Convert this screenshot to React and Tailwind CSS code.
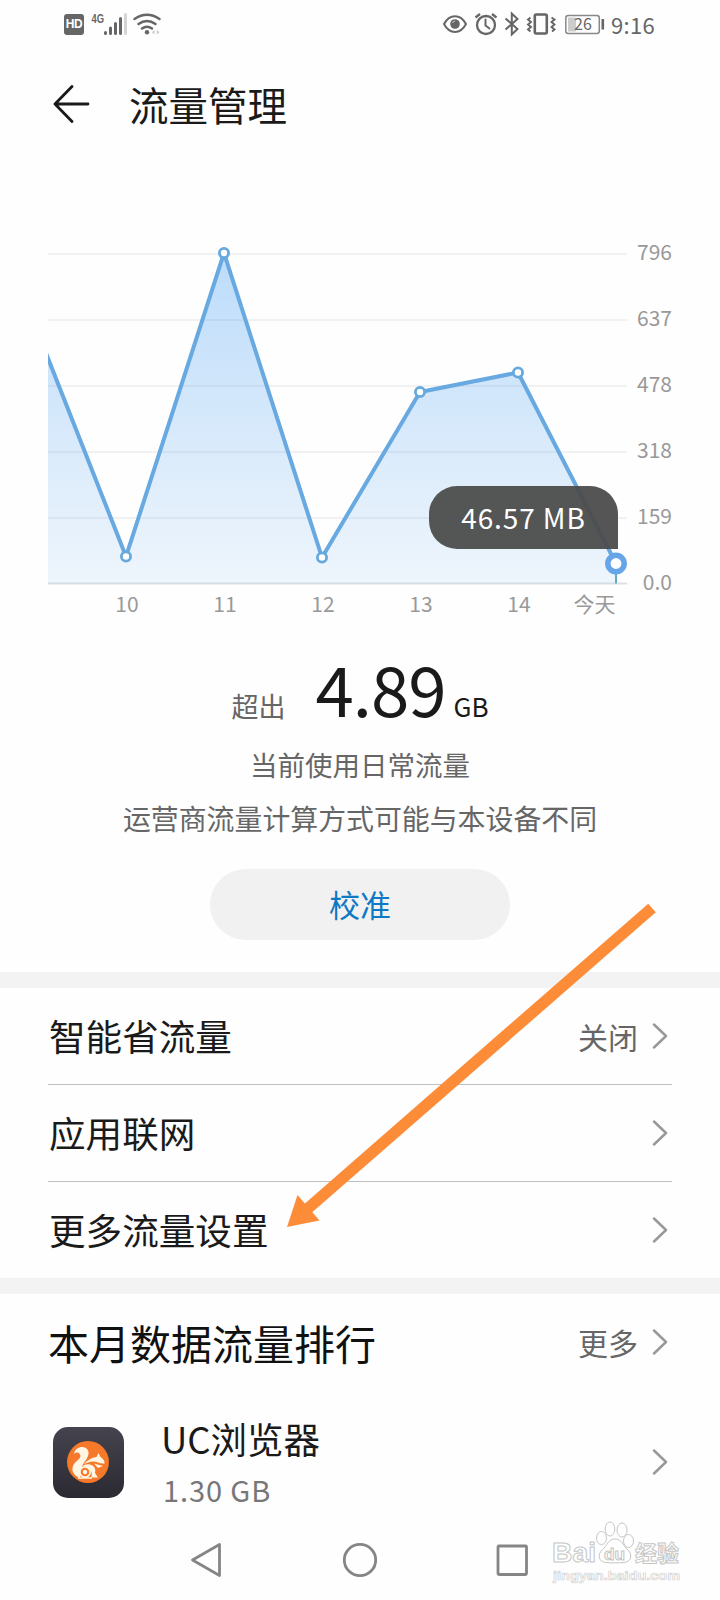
import React from 'react';

const GRID = [
    { y: 254, label: '796' },
    { y: 320, label: '637' },
    { y: 386, label: '478' },
    { y: 452, label: '318' },
    { y: 518, label: '159' },
    { y: 583.5, label: '0.0' },
];

const POINTS = [
    { x: 126, y: 556.5, label: '10' },
    { x: 224, y: 253, label: '11' },
    { x: 322, y: 557.5, label: '12' },
    { x: 420, y: 392, label: '13' },
    { x: 518, y: 372.5, label: '14' },
    { x: 616, y: 563.5, label: '今天' },
];

function StatusBar() {
    return (
        <div className="h-12 flex items-center justify-between pl-[64px] pr-[65px] text-[#666]">
            <div className="flex items-center">
                <div className="w-[20px] h-[21px] rounded-[3px] bg-[#666] text-white text-[12px] leading-[21px] font-bold text-center tracking-tight font-['Liberation_Sans',sans-serif]">HD</div>
                <svg className="ml-[7px]" width="37" height="24" viewBox="91 12 37 24">
                    <text x="91.5" y="22.5" fontSize="13" fontWeight="bold" fill="#666" textLength="12.5" lengthAdjust="spacingAndGlyphs" fontFamily="Liberation Sans, sans-serif">4G</text>
                    <g stroke="#666" strokeWidth="3" strokeLinecap="round">
                        <path d="M105.500 32.500V33.500M110.500 28V33.500M115.500 23.500V33.500M120.500 18.500V33.500" />
                        <path d="M125.500 14.500V33.500" stroke="#d4d4d4" />
                    </g>
                </svg>
                <svg className="ml-[5px]" width="28" height="24" viewBox="133 12 28 24" fill="none" stroke="#666" strokeWidth="2.400" strokeLinecap="round">
                    <path d="M134.500 19Q147 10.500 159.500 19M138.500 24Q147 18 155.500 24M142 28.500Q147 25 152 28.500" />
                    <circle cx="147" cy="32.300" r="2.200" fill="#666" stroke="none" />
                    <path d="M154.500 30L151.800 32.300L154.500 34.500ZM156.800 30L159.500 32.300L156.800 34.500Z" fill="#ccc" stroke="none" />
                </svg>
            </div>
            <div className="flex items-center">
                <svg width="166" height="26" viewBox="442 11 166 26" fill="none" stroke="#666" strokeWidth="2">
                    <path d="M444 24C449.500 13.500 460.500 13.500 466 24C460.500 34.500 449.500 34.500 444 24Z" />
                    <circle cx="455" cy="24" r="4.800" fill="#666" stroke="none" />
                    <path d="M452.500 23Q453 21 455 21" stroke="#ccc" strokeWidth="1" />
                    <circle cx="486" cy="25" r="9" strokeWidth="2.300" />
                    <path d="M485.500 19.500V25.500L489.500 28.500" strokeLinecap="round" />
                    <path d="M475.500 17.500L480 14M496.500 17.500L492 14" strokeWidth="2.300" />
                    <path d="M505.500 18.500L517.500 29L511.800 34.500V13.500L517.500 19L505.500 29.500" />
                    <rect x="534.800" y="14.500" width="12" height="19" rx="1.500" strokeWidth="2.600" />
                    <path d="M530.500 17.500L528 19.500L531 22L528 24.500L531 27L528 29.500L530.500 31.500M551.500 17.500L554.500 19.500L551.500 22L554.500 24.500L551.500 27L554.500 29.500L552 31.500" strokeWidth="1.900" />
                    <rect x="565.800" y="15.500" width="33.500" height="18" rx="2.500" stroke="#888" strokeWidth="1.500" />
                    <rect x="568" y="17.500" width="8" height="14" fill="#ccc" stroke="none" />
                    <path d="M602.800 19V29.500" strokeWidth="2.600" />
                    <text x="583" y="30.200" fontSize="16" textAnchor="middle" fill="#666" stroke="none">26</text>
                </svg>
                <span className="ml-[2px] w-[45px] text-right text-[22px] leading-none tracking-[0.3px] whitespace-nowrap">9:16</span>
            </div>
        </div>
    );
}

function UsageChart() {
    const line = 'M44 348 ' + POINTS.map((p) => `L${p.x} ${p.y}`).join(' ');
    return (
        <div className="relative h-[480px]">
            <svg width="720" height="480" viewBox="0 160 720 480">
                <defs>
                    <linearGradient id="area" gradientUnits="userSpaceOnUse" x1="0" y1="252" x2="0" y2="584">
                        <stop offset="0" stopColor="#3c9af4" stopOpacity="0.34" />
                        <stop offset="1" stopColor="#3c94ea" stopOpacity="0.08" />
                    </linearGradient>
                    <clipPath id="plot"><rect x="48" y="230" width="590" height="356" /></clipPath>
                </defs>
                {GRID.map((g, i) => (
                    <g key={g.label}>
                        <path d={`M48 ${g.y}H627`} stroke={i === 5 ? '#dbe1e7' : '#f1f1f1'} strokeWidth="2" />
                        <text x="672" y={g.y + 6} fontSize="21" textAnchor="end" fill="#999">{g.label}</text>
                    </g>
                ))}
                <g clipPath="url(#plot)">
                    <path d={`${line} V583.5 H44 Z`} fill="url(#area)" />
                    <path d={line} fill="none" stroke="#67a9e0" strokeWidth="4" strokeLinejoin="round" />
                </g>
                <path d="M616 570V583.500" stroke="#66aabf" strokeWidth="2" />
                {POINTS.slice(0, 5).map((p) => (
                    <circle key={p.x} cx={p.x} cy={p.y} r="4.600" fill="#fff" stroke="#66a9dd" strokeWidth="2.800" />
                ))}
                <circle cx="616" cy="563.500" r="8.200" fill="#fff" stroke="#66a6e8" strokeWidth="5.500" />
                {POINTS.map((p, i) => (
                    <text key={p.x} x={i === 5 ? 594.5 : p.x + 1} y="611.500" fontSize="21" textAnchor="middle" fill="#999">{p.label}</text>
                ))}
            </svg>
            <div className="absolute left-[429px] top-[326px] w-[189px] h-[63px] rounded-[28px] rounded-br-none bg-[#4c4c4c]/95 text-white text-[28px] leading-[62px] text-center tracking-[0.9px]">46.57 MB</div>
        </div>
    );
}

function Chevron() {
    return (
        <svg className="ml-[14px]" width="16" height="26" viewBox="0 0 16 26" fill="none" stroke="#999" strokeWidth="2.500" strokeLinecap="round" strokeLinejoin="round">
            <path d="M2 1.500L14 13L2 24.500" />
        </svg>
    );
}

function Row({ title, value, last }) {
    return (
        <div className={`mx-12 flex items-center pl-px pr-1 ${last ? 'h-24' : 'h-[97px] border-b border-[#bfc1c1]'}`}>
            <span className="flex-1 text-[36.600px] leading-[36px] text-[#1a1a1a]">{title}</span>
            {value && <span className="text-[30px] leading-none text-[#666]">{value}</span>}
            <Chevron />
        </div>
    );
}

function UcIcon() {
    return (
        <svg className="shrink-0" width="71" height="71" viewBox="0 0 71 71">
            <defs>
                <linearGradient id="tile" x1="0" y1="0" x2="0" y2="1">
                    <stop offset="0" stopColor="#45434d" />
                    <stop offset="1" stopColor="#2b2a32" />
                </linearGradient>
            </defs>
            <rect width="71" height="71" rx="15" fill="url(#tile)" />
            <circle cx="35" cy="35" r="21" fill="#f6792a" />
            {/* tail */}
            <path d="M21 27C22 19 34 17 35.500 25C36.500 31 29 36 29 41L27 51C21 49 17 43 21 37C24 33 29 31 27 27.500C25.500 25 23 25 21 27Z" fill="#fff6e4" />
            {/* head and body */}
            <path d="M31 37C36 32 40 30.500 43.500 30L45.500 26L47.500 30C50.500 32 52 34.500 51.500 36.500C47 37 44 34.500 40 34.500C36 34.500 34 36 31 37Z" fill="#fff6e4" />
            <path d="M30 38.500C37 35 44 39 42 46L45 50.500H38C41 44 35 40 30 38.500ZM41 36.500L45 41L50 39Z" fill="#fff6e4" />
            <circle cx="32" cy="45" r="5.200" fill="#f6792a" stroke="#fff6e4" strokeWidth="1.800" />
            <circle cx="32" cy="45" r="2.200" fill="#fff6e4" />
            <path d="M25 51H39" stroke="#fff6e4" strokeWidth="1.500" />
        </svg>
    );
}

function NavBar() {
    return (
        <svg width="720" height="80" viewBox="0 1520 720 80" fill="none" stroke="#858585" strokeWidth="2.800" strokeLinejoin="round">
            <path d="M192.500 1560L219.500 1544.500V1575.500Z" />
            <circle cx="360" cy="1560" r="15.700" />
            <rect x="498" y="1546" width="28.500" height="28.500" rx="1" />
        </svg>
    );
}

function Watermark() {
    return (
        <svg className="absolute left-[548px] top-[1516px]" width="140" height="76" viewBox="548 1516 140 76" fill="#fff" stroke="#c6c6c6" strokeWidth="1">
            <g fontWeight="bold" fontFamily="Liberation Sans, Noto Sans CJK SC, sans-serif">
                <text x="552" y="1561.500" fontSize="27" textLength="44" lengthAdjust="spacingAndGlyphs">Bai</text>
                <path d="M615 1539C608 1539 607 1546 602 1550C597 1555 599 1562 606 1562.500C611 1563 619 1563 624 1562.500C631 1562 633 1555 628 1550C623 1546 622 1539 615 1539Z" />
                <ellipse cx="601.500" cy="1538" rx="5" ry="6.500" />
                <ellipse cx="610" cy="1529" rx="4.800" ry="7" />
                <ellipse cx="622" cy="1530" rx="5" ry="7" />
                <ellipse cx="628.500" cy="1541" rx="5" ry="6.500" />
                <text x="604" y="1559.500" fontSize="17" textLength="21" lengthAdjust="spacingAndGlyphs">du</text>
                <text x="635" y="1561" fontSize="22" textLength="44" lengthAdjust="spacingAndGlyphs">经验</text>
                <text x="553" y="1580" fontSize="13" strokeWidth="0.700" stroke="#d4d4d4" textLength="127" lengthAdjust="spacingAndGlyphs">jingyan.baidu.com</text>
            </g>
        </svg>
    );
}

function App() {
    return (
        <div className="relative w-[720px] h-[1600px] overflow-hidden bg-[#fefefe] font-['Noto_Sans_CJK_SC','Noto_Sans',sans-serif]">
            <StatusBar />
            <header className="h-28 flex items-center pl-[53px]">
                <svg width="38" height="38" viewBox="0 0 38 38" fill="none" stroke="#1a1a1a" strokeWidth="2.800" strokeLinecap="round" strokeLinejoin="round">
                    <path d="M19 1.500L2 19L19 36.500M2 19H35" />
                </svg>
                <h1 className="ml-[38px] text-[39.500px] leading-none text-[#1a1a1a]">流量管理</h1>
            </header>

            <UsageChart />

            <section className="h-[332px] flex flex-col items-center">
                <div className="h-[97px] flex items-baseline leading-[94px] text-[#1a1a1a]">
                    <span className="text-[27px] text-[#666] mr-[30px]">超出</span>
                    <span className="text-[69px] tracking-[-1px]">4.89</span>
                    <span className="ml-[8px] text-[26px]">GB</span>
                </div>
                <p className="h-[54px] text-[27.500px] leading-[54px] text-[#666]">当前使用日常流量</p>
                <p className="h-[54px] text-[27.900px] leading-[54px] text-[#666]">运营商流量计算方式可能与本设备不同</p>
                <button className="mt-[24px] w-[300px] h-[71px] rounded-full bg-[#f1f1f1] text-[31px] text-[#0f78c4]">校准</button>
            </section>

            <div className="h-4 bg-[#f3f3f3]" />
            <Row title="智能省流量" value="关闭" />
            <Row title="应用联网" />
            <Row title="更多流量设置" last />
            <div className="h-4 bg-[#f3f3f3]" />

            <section className="h-[226px] mx-12 pr-1">
                <div className="h-24 flex items-center">
                    <h2 className="flex-1 text-[41px] leading-none text-[#111]">本月数据流量排行</h2>
                    <span className="text-[30px] leading-none text-[#666]">更多</span>
                    <Chevron />
                </div>
                <div className="h-[144px] flex items-center pl-[5px]">
                    <UcIcon />
                    <div className="flex-1 ml-[37px] pt-[4px]">
                        <div className="text-[36.500px] leading-[50px] text-[#1a1a1a]">UC浏览器</div>
                        <div className="ml-[2px] text-[29px] leading-[50px] tracking-[0.9px] text-[#777]">1.30 GB</div>
                    </div>
                    <Chevron />
                </div>
            </section>

            <NavBar />

            {/* pointer to the settings row */}
            <svg className="absolute left-0 top-[890px] pointer-events-none" width="720" height="350" viewBox="0 890 720 350">
                <path d="M652 908L305 1211" stroke="#fd8c38" strokeWidth="11.500" />
                <path d="M287 1227L297.500 1195L319.500 1220.500Z" fill="#fd8c38" />
            </svg>
            <Watermark />
        </div>
    );
}

export default App;
